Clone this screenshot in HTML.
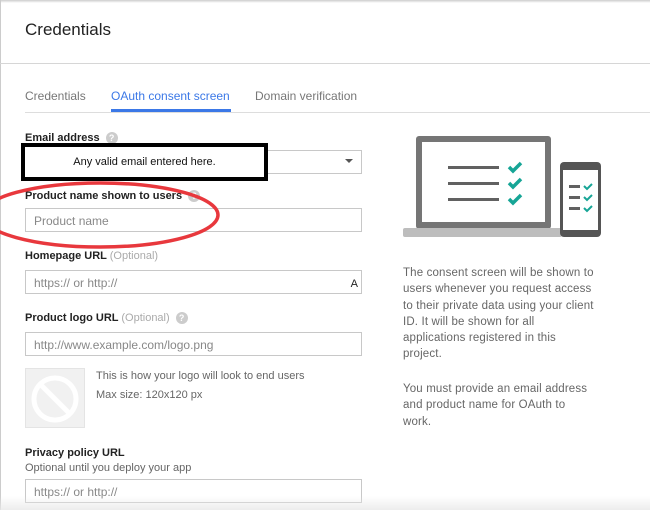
<!DOCTYPE html>
<html><head><style>
*{margin:0;padding:0;box-sizing:border-box}
body{width:650px;height:510px;overflow:hidden;background:#fff;font-family:"Liberation Sans",Arial,sans-serif;position:relative}
.a{position:absolute}
.lbl{font-size:11px;font-weight:bold;color:#222;}
.opt{font-weight:normal;color:#aaa}
.inp{position:absolute;left:25px;width:337px;height:24px;border:1px solid #c8c8c8;font-size:12px;color:#888;padding:5px 0 0 8px;background:#fff}
.q{display:inline-block;width:12px;height:12px;border-radius:50%;background:#ccc;color:#fff;font-size:9px;text-align:center;line-height:12px;font-weight:bold;vertical-align:middle;margin-left:6px}
.t{font-size:11px;color:#666;line-height:16.3px}
.r{font-size:11.5px;color:#666;line-height:16.3px;white-space:nowrap;letter-spacing:0.15px}
</style></head><body>
<div class="a" style="left:0;top:0;width:650px;height:3px;background:linear-gradient(#ccc,#fff)"></div>
<div class="a" style="left:0;top:0;width:1px;height:510px;background:#ccc"></div>
<div class="a" style="left:25px;top:20px;font-size:17px;color:#222">Credentials</div>
<div class="a" style="left:0;top:63px;width:650px;height:1px;background:#d6d6d6"></div>
<div class="a" style="left:25px;top:89px;font-size:12px;color:#777">Credentials</div>
<div class="a" style="left:111px;top:89px;font-size:12px;color:#3b78e7">OAuth consent screen</div>
<div class="a" style="left:255px;top:89px;font-size:12px;color:#777">Domain verification</div>
<div class="a" style="left:25px;top:112px;width:625px;height:1px;background:#ddd"></div>
<div class="a" style="left:111px;top:109px;width:120px;height:3px;background:#3b78e7"></div>

<div class="a lbl" style="left:25px;top:132px">Email address<span class="q">?</span></div>
<div class="inp" style="top:150px"></div>
<div class="a" style="left:345px;top:159px;border-left:4px solid transparent;border-right:4px solid transparent;border-top:4px solid #555"></div>
<div class="a" style="left:21px;top:143px;width:247px;height:38px;border:4px solid #000;background:#fff;font-size:11px;color:#111;text-align:center;line-height:30px">Any valid email entered here.</div>

<div class="a lbl" style="left:25px;top:190px">Product name shown to users<span class="q">?</span></div>
<div class="inp" style="top:208px">Product name</div>

<div class="a lbl" style="left:25px;top:250px">Homepage URL <span class="opt">(Optional)</span></div>
<div class="inp" style="top:270px">https:// or http://<span style="position:absolute;right:3px;top:7px;font-size:11px;color:#222">A</span></div>

<div class="a lbl" style="left:25px;top:312px">Product logo URL <span class="opt">(Optional)</span><span class="q">?</span></div>
<div class="inp" style="top:332px">http://www.example.com/logo.png</div>
<div class="a" style="left:25px;top:368px;width:60px;height:60px;background:#f1f1f1;border:1px solid #e4e4e4">
<svg width="58" height="58" viewBox="0 0 58 58"><circle cx="29" cy="30" r="21" fill="none" stroke="#fff" stroke-width="5"/><line x1="15" y1="16" x2="43" y2="44" stroke="#fff" stroke-width="5"/></svg></div>
<div class="a t" style="left:96px;top:368px">This is how your logo will look to end users</div>
<div class="a t" style="left:96px;top:387px">Max size: 120x120 px</div>

<div class="a lbl" style="left:25px;top:447px">Privacy policy URL</div>
<div class="a t" style="left:25px;top:460px">Optional until you deploy your app</div>
<div class="inp" style="top:479px">https:// or http://</div>
<div class="a" style="left:0;top:496px;width:650px;height:14px;background:linear-gradient(rgba(255,255,255,0),rgba(232,232,232,0.8))"></div>

<svg class="a" style="left:400px;top:130px" width="210" height="120" viewBox="0 0 210 120">
<rect x="16" y="6" width="135" height="93" rx="3" fill="#757575"/>
<rect x="22" y="12" width="123" height="80" fill="#fff"/>
<rect x="3" y="98" width="159" height="9" rx="2" fill="#bdbdbd"/>
<rect x="48" y="36" width="51" height="3" fill="#616161"/>
<rect x="48" y="52" width="51" height="3" fill="#616161"/>
<rect x="48" y="68" width="51" height="3" fill="#616161"/>
<g fill="none" stroke="#16a596" stroke-width="3.5"><path d="M109 37l4 4 8-8"/><path d="M109 53l4 4 8-8"/><path d="M109 69l4 4 8-8"/></g>
<rect x="160" y="32" width="41" height="75" rx="4" fill="#555"/>
<rect x="163" y="40" width="35" height="60" fill="#fff"/>
<rect x="169" y="55" width="11" height="3" fill="#616161"/>
<rect x="169" y="66" width="11" height="3" fill="#616161"/>
<rect x="169" y="77" width="11" height="3" fill="#616161"/>
<g fill="none" stroke="#16a596" stroke-width="2"><path d="M184 56l3 3 5-5"/><path d="M184 67l3 3 5-5"/><path d="M184 78l3 3 5-5"/></g>
</svg>
<div class="a r" style="left:403px;top:265px">The consent screen will be shown to<br>users whenever you request access<br>to their private data using your client<br>ID. It will be shown for all<br>applications registered in this<br>project.</div>
<div class="a r" style="left:403px;top:381px">You must provide an email address<br>and product name for OAuth to<br>work.</div>

<svg class="a" style="left:0;top:175px" width="240" height="80"><ellipse cx="100" cy="40" rx="118" ry="32" fill="none" stroke="#e8383d" stroke-width="3.5"/></svg>
</body></html>
